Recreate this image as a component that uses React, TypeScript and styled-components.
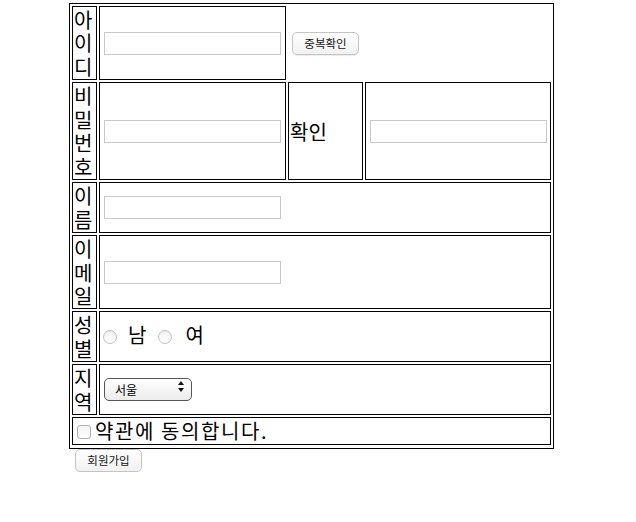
import React from 'react';
import styled, { createGlobalStyle } from 'styled-components';

const GlobalStyle = createGlobalStyle`
  body {
    margin: 0;
    background: #ffffff;
    font-family: "Noto Sans CJK KR", "Noto Sans", sans-serif;
    color: #000000;
  }
`;

const Page = styled.form`
  padding: 3px 0 0 69px;
`;

const FormTable = styled.div`
  display: grid;
  grid-template-columns: 25px 187px 75px 186px;
  gap: 2px;
  width: 485px;
  box-sizing: border-box;
  padding: 2px 2px 3px;
  border: 1px solid #000;
`;

const Cell = styled.div<{ $span?: number; $bare?: boolean }>`
  grid-column: span ${({ $span }) => $span || 1};
  display: flex;
  align-items: center;
  padding: 1px;
  border: 1px solid ${({ $bare }) => ($bare ? 'transparent' : '#000')};
  font-size: 20px;
  font-weight: 400;
  line-height: 23.45px;
  color: #000;
  min-width: 0;
`;

const LabelCell = styled(Cell)`
  display: block;
  word-break: break-all;
`;

const AgreeCell = styled(Cell)`
  letter-spacing: 1.6px;
`;

const TextInput = styled.input`
  width: 177px;
  height: 23px;
  box-sizing: border-box;
  margin: 0 0 0 3px;
  border: 1px solid #c9c9c9;
  padding: 0 3px;
  font: 13px "Noto Sans CJK KR", sans-serif;
  outline: none;
`;

const PlainButton = styled.button<{ $offset?: number }>`
  width: 67px;
  height: 23px;
  margin: 0 0 0 ${({ $offset }) => $offset || 0}px;
  padding: 0;
  border: 1px solid #c4c4c4;
  border-radius: 5px;
  background: linear-gradient(#ffffff, #f1f1f1);
  box-shadow: 0 1px 1px rgba(0, 0, 0, 0.08);
  font: 11.5px "Noto Sans CJK KR", sans-serif;
  color: #111;
`;

const Radio = styled.input.attrs({ type: 'radio' })`
  appearance: none;
  width: 14px;
  height: 14px;
  margin: 7px 0 0 0;
  border: 1px solid #c3c3c3;
  border-radius: 50%;
  background: linear-gradient(#f3f3f3, #ffffff);
  box-shadow: inset 0 1px 1px rgba(0, 0, 0, 0.06);
`;

const OptionText = styled.span<{ $left: number }>`
  margin: -4px 0 0 ${({ $left }) => $left}px;
`;

const SelectWrap = styled.span`
  position: relative;
  display: inline-block;
  margin: -3px 0 0 3px;
`;

const Select = styled.select`
  appearance: none;
  width: 88px;
  height: 23px;
  box-sizing: border-box;
  padding: 0 0 0 10px;
  border: 1px solid #555;
  border-radius: 5px;
  background: linear-gradient(#ffffff, #ececec);
  font: 12px "Noto Sans CJK KR", sans-serif;
  color: #000;
  outline: none;
`;

const SelectArrows = styled.svg`
  position: absolute;
  right: 8px;
  top: 6px;
  pointer-events: none;
`;

const Checkbox = styled.input.attrs({ type: 'checkbox' })`
  appearance: none;
  width: 14px;
  height: 14px;
  margin: 3px 4px 0 3px;
  border: 1px solid #b0b0b0;
  border-radius: 3px;
  background: linear-gradient(#f4f4f4, #ffffff);
`;

const Footer = styled.div`
  display: flex;
  padding: 0 0 0 6px;
`;

const App: React.FC = () => (
  <>
    <GlobalStyle />
    <Page onSubmit={(e) => e.preventDefault()}>
      <FormTable>
        <LabelCell>아이디</LabelCell>
        <Cell>
          <TextInput type="text" />
        </Cell>
        <Cell $span={2} $bare>
          <PlainButton type="button" $offset={2}>중복확인</PlainButton>
        </Cell>

        <LabelCell>비밀번호</LabelCell>
        <Cell>
          <TextInput type="password" />
        </Cell>
        <Cell>확인</Cell>
        <Cell>
          <TextInput type="password" />
        </Cell>

        <LabelCell>이름</LabelCell>
        <Cell $span={3}>
          <TextInput type="text" />
        </Cell>

        <LabelCell>이메일</LabelCell>
        <Cell $span={3}>
          <TextInput type="text" />
        </Cell>

        <LabelCell>성별</LabelCell>
        <Cell $span={3}>
          <OptionText $left={2}>
            <Radio name="gender" />
          </OptionText>
          <OptionText $left={11}>남</OptionText>
          <OptionText $left={12}>
            <Radio name="gender" />
          </OptionText>
          <OptionText $left={13}>여</OptionText>
        </Cell>

        <LabelCell>지역</LabelCell>
        <Cell $span={3}>
          <SelectWrap>
            <Select defaultValue="서울">
              <option>서울</option>
              <option>경기</option>
              <option>부산</option>
            </Select>
            <SelectArrows width="6" height="11" viewBox="0 0 6 11">
              <path d="M3 0 L6 4 L0 4 Z" fill="#111" />
              <path d="M0 7 L6 7 L3 11 Z" fill="#111" />
            </SelectArrows>
          </SelectWrap>
        </Cell>

        <AgreeCell $span={4}>
          <Checkbox />
          약관에 동의합니다.
        </AgreeCell>
      </FormTable>
      <Footer>
        <PlainButton type="submit">회원가입</PlainButton>
      </Footer>
    </Page>
  </>
);

export default App;
